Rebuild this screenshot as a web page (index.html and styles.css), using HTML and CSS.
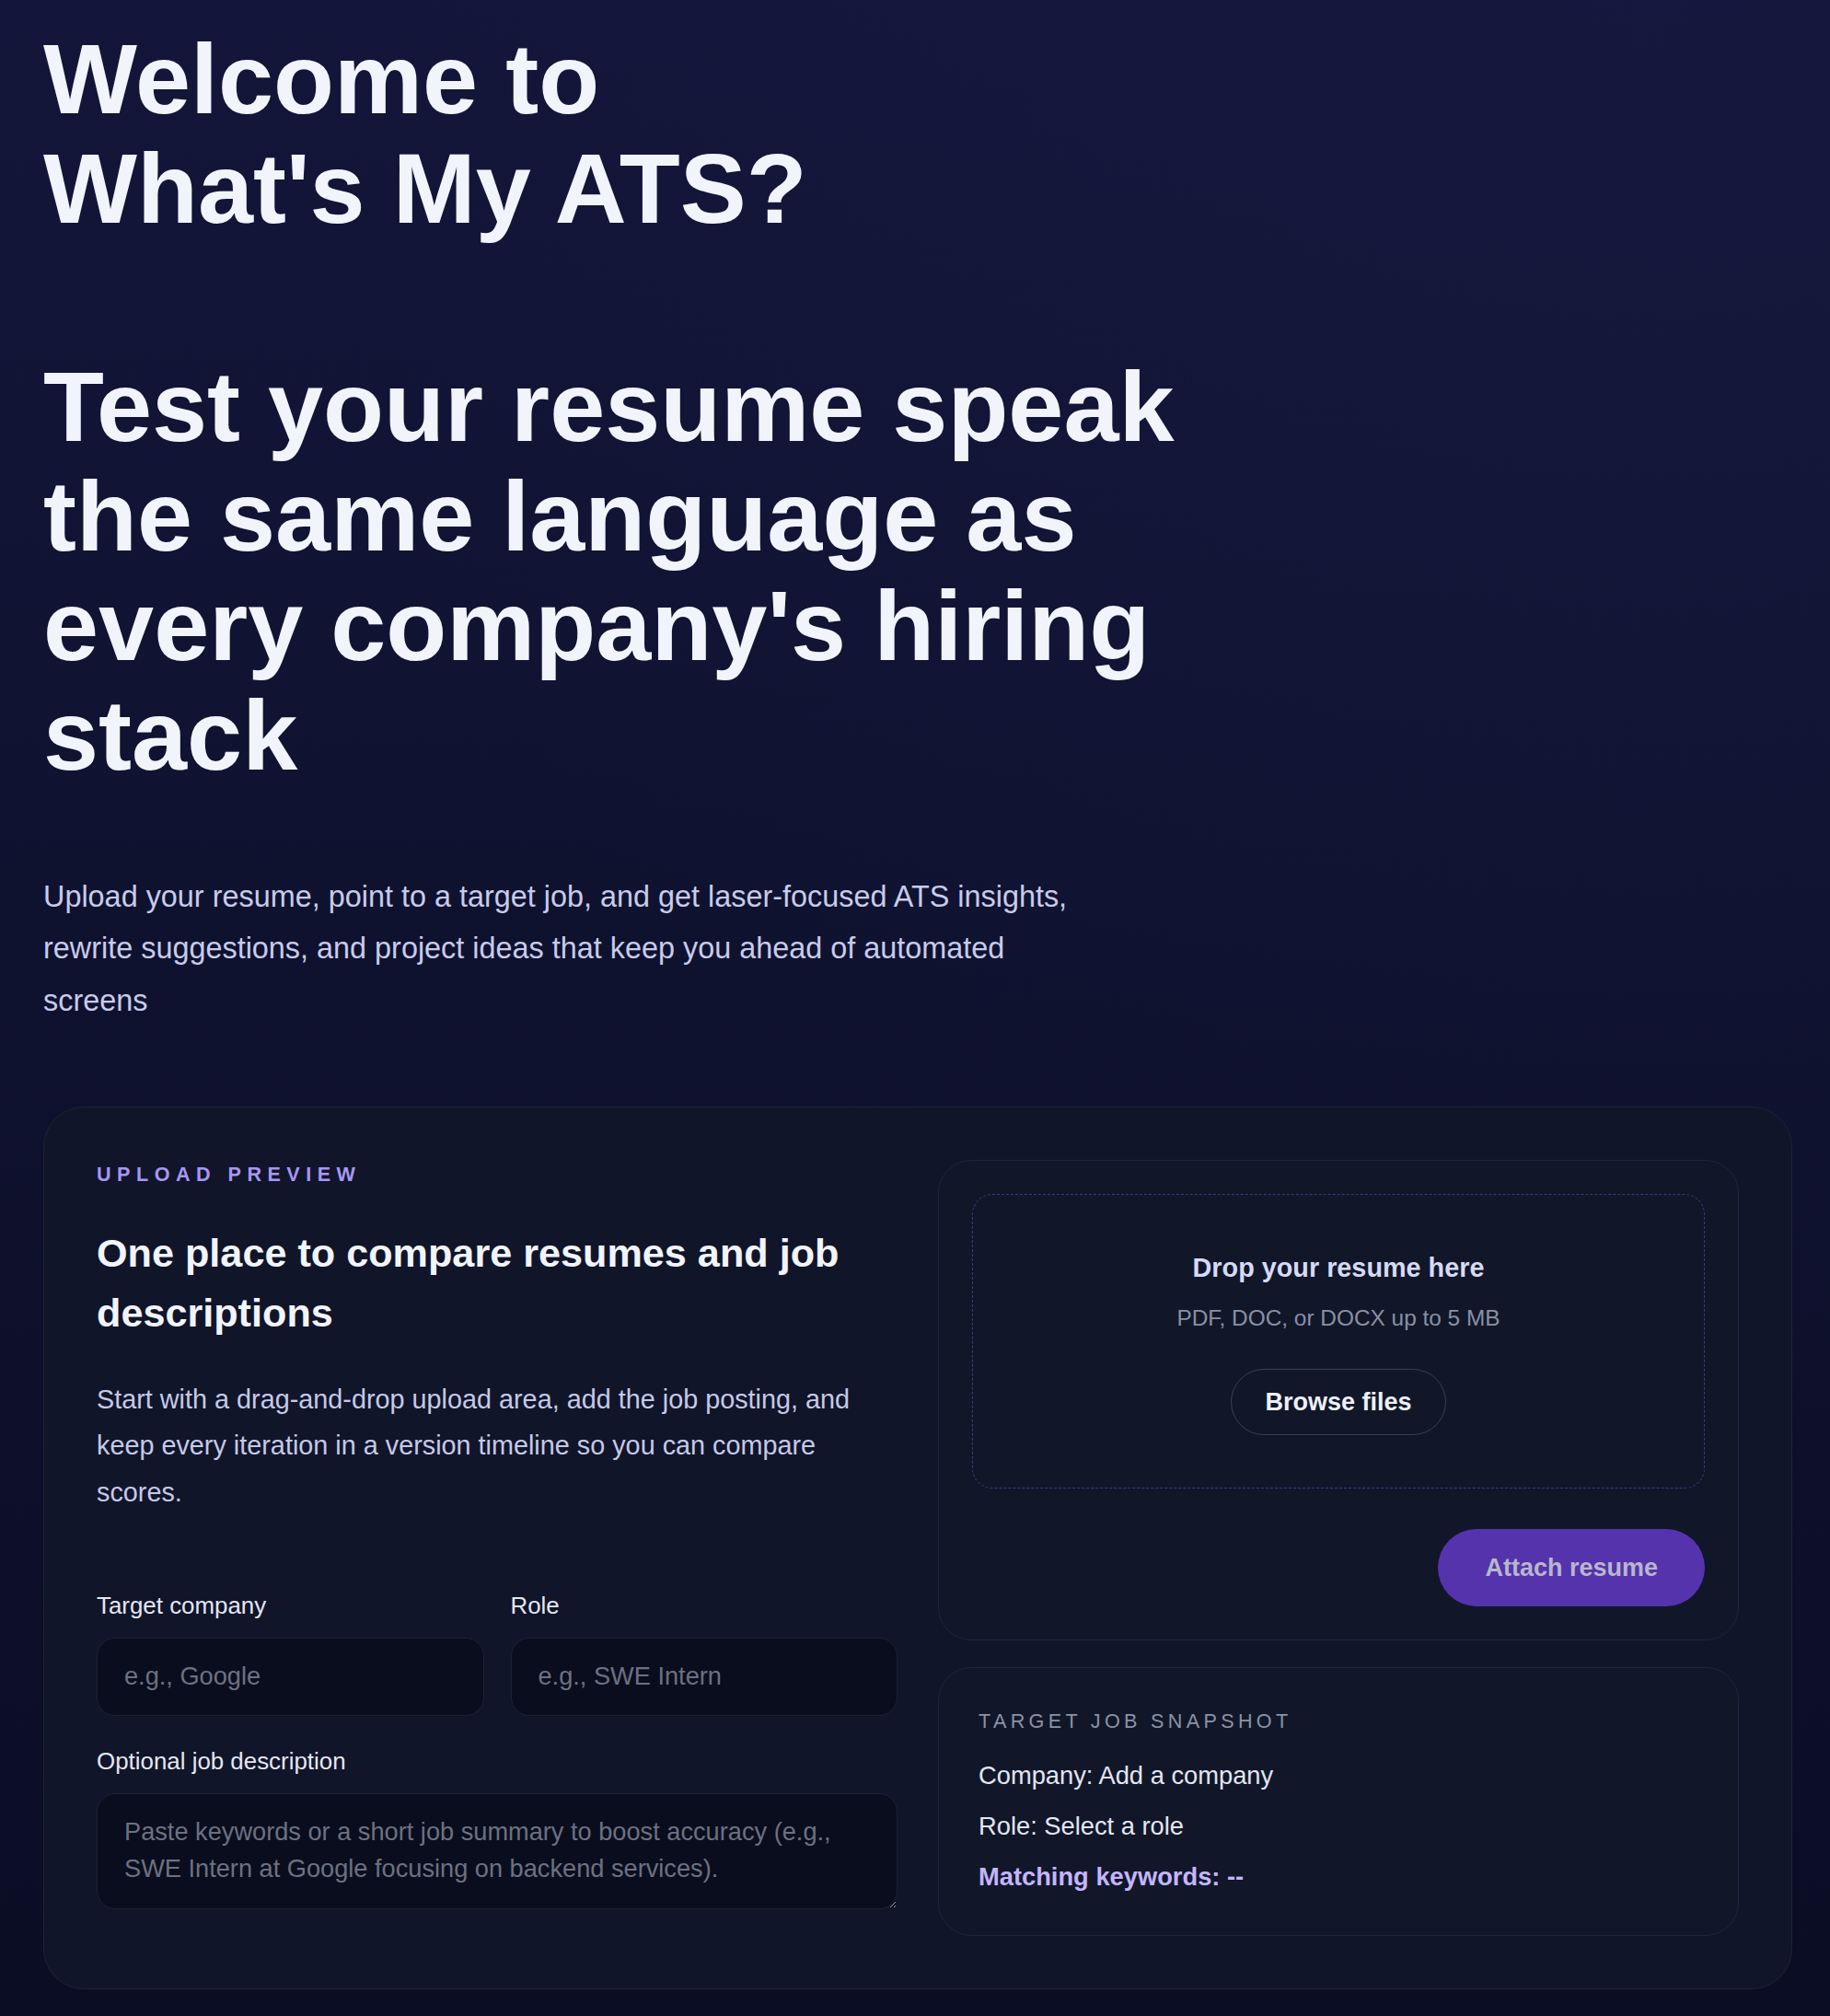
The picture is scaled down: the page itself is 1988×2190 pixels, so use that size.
FILE: index.html
```html
<!DOCTYPE html>
<html lang="en">
<head>
<meta charset="utf-8">
<title>What's My ATS?</title>
<link rel="stylesheet" href="styles.css">
</head>
<body>
<main class="page">
  <section class="hero">
    <h1 class="hero-title">Welcome to<br>What's My ATS?<br><br>Test your resume speak the same language as every company's hiring stack</h1>
    <p class="hero-lead">Upload your resume, point to a target job, and get laser-focused ATS insights, rewrite suggestions, and project ideas that keep you ahead of automated screens</p>
  </section>

  <section class="card">
    <div class="card-intro">
      <p class="eyebrow">Upload preview</p>
      <h2 class="card-title">One place to compare resumes and job descriptions</h2>
      <p class="card-text">Start with a drag-and-drop upload area, add the job posting, and keep every iteration in a version timeline so you can compare scores.</p>

      <form class="form">
        <div class="form-row">
          <label class="field">
            <span class="field-label">Target company</span>
            <input class="input" type="text" placeholder="e.g., Google">
          </label>
          <label class="field">
            <span class="field-label">Role</span>
            <input class="input" type="text" placeholder="e.g., SWE Intern">
          </label>
        </div>
        <label class="field">
          <span class="field-label">Optional job description</span>
          <textarea class="textarea" rows="2" placeholder="Paste keywords or a short job summary to boost accuracy (e.g., SWE Intern at Google focusing on backend services)."></textarea>
        </label>
      </form>
    </div>

    <div class="card-side">
      <div class="panel upload-panel">
        <div class="dropzone">
          <p class="drop-title">Drop your resume here</p>
          <p class="drop-sub">PDF, DOC, or DOCX up to 5 MB</p>
          <button class="btn-ghost" type="button">Browse files</button>
        </div>
        <div class="upload-actions">
          <button class="btn-primary" type="button">Attach resume</button>
        </div>
      </div>

      <div class="panel snapshot">
        <p class="snap-label">Target job snapshot</p>
        <ul class="snap-list">
          <li class="snap-line">Company: Add a company</li>
          <li class="snap-line">Role: Select a role</li>
          <li class="snap-line snap-match">Matching keywords: --</li>
        </ul>
      </div>
    </div>
  </section>
</main>
</body>
</html>
```

FILE: styles.css
```css
* {
  box-sizing: border-box;
}

html, body {
  margin: 0;
  padding: 0;
}

body {
  min-height: 100vh;
  font-family: "Liberation Sans", Arial, Helvetica, sans-serif;
  color: #f1f4fb;
  background:
    radial-gradient(ellipse at 90% 0%, rgba(34, 38, 84, 0.18), rgba(34, 38, 84, 0) 55%),
    linear-gradient(180deg, #13163a 0%, #0f122f 45%, #0b0d25 100%);
}

.page {
  padding: 27px 41px 28px 47px;
}

/* Hero */
.hero-title {
  margin: 0 0 87px;
  max-width: 1300px;
  font-size: 108px;
  line-height: 118.8px;
  font-weight: 700;
  color: #f1f4fb;
}

.hero-lead {
  margin: 0 0 86px;
  max-width: 1152px;
  font-size: 32.4px;
  line-height: 56.7px;
  color: #c8cbeb;
}

/* Card */
.card {
  display: grid;
  grid-template-columns: 1fr 1fr;
  gap: 44px;
  padding: 57px;
  border: 1px solid #1d2236;
  border-radius: 44px;
  background: #10152a;
}

.eyebrow {
  margin: 0;
  font-size: 21.6px;
  line-height: 32.4px;
  font-weight: 700;
  letter-spacing: 0.3em;
  text-transform: uppercase;
  color: #a797f2;
}

.card-title {
  margin: 37px 0 0;
  font-size: 43.2px;
  line-height: 64.8px;
  font-weight: 700;
  color: #f1f4fb;
}

.card-text {
  margin: 36px 0 0;
  font-size: 28.8px;
  line-height: 50.4px;
  color: #c6c9e6;
}

/* Form */
.form {
  display: flex;
  flex-direction: column;
  gap: 31px;
  margin-top: 80px;
}

.form-row {
  display: grid;
  grid-template-columns: 1fr 1fr;
  gap: 29px;
}

.field {
  display: flex;
  flex-direction: column;
  gap: 15px;
}

.field-label {
  font-size: 25.9px;
  line-height: 37.8px;
  color: #e5e7f2;
}

.input,
.textarea {
  width: 100%;
  border: 1px solid #1c2134;
  border-radius: 20px;
  background: #0a0d1d;
  color: #e5e7f2;
  font-family: inherit;
  font-size: 27.2px;
  outline: none;
}

.input {
  height: 85px;
  padding: 0 29px;
}

.textarea {
  height: 126px;
  padding: 21px 29px;
  line-height: 40.5px;
  resize: vertical;
}

.input::placeholder,
.textarea::placeholder {
  color: #6c7182;
}

/* Side column */
.card-side {
  display: flex;
  flex-direction: column;
  gap: 29px;
}

.panel {
  border: 1px solid #1f2538;
  border-radius: 36px;
  background: #111729;
}

.upload-panel {
  padding: 36px;
}

.dropzone {
  display: flex;
  flex-direction: column;
  align-items: center;
  padding: 58px 36px 57px;
  border: 1px dashed #3b3885;
  border-radius: 22px;
  text-align: center;
}

.drop-title {
  margin: 0;
  font-size: 28.8px;
  line-height: 43.2px;
  font-weight: 700;
  color: #d6daf6;
}

.drop-sub {
  margin: 15.5px 0 0;
  font-size: 24.4px;
  line-height: 36.75px;
  color: #8a90a6;
}

.btn-ghost {
  margin-top: 36px;
  padding: 19px 36px;
  border: 1px solid #3a3f52;
  border-radius: 999px;
  background: transparent;
  color: #eef0f8;
  font-family: inherit;
  font-size: 27px;
  line-height: 32px;
  font-weight: 700;
}

.upload-actions {
  display: flex;
  justify-content: flex-end;
  margin-top: 44px;
}

.btn-primary {
  padding: 26px 51px;
  border: 0;
  border-radius: 999px;
  background: #5533ad;
  color: #b8b6cc;
  font-family: inherit;
  font-size: 27px;
  line-height: 32px;
  font-weight: 700;
}

.snapshot {
  padding: 42px 43px 43px;
}

.snap-label {
  margin: 0;
  font-size: 21.6px;
  line-height: 32.4px;
  letter-spacing: 0.2em;
  text-transform: uppercase;
  color: #8a93a6;
}

.snap-list {
  display: flex;
  flex-direction: column;
  gap: 14.4px;
  margin: 22.6px 0 0;
  padding: 0;
  list-style: none;
}

.snap-line {
  font-size: 27.3px;
  line-height: 40.5px;
  color: #e3e6f3;
}

.snap-match {
  font-weight: 700;
  color: #c4b5fd;
}
```
